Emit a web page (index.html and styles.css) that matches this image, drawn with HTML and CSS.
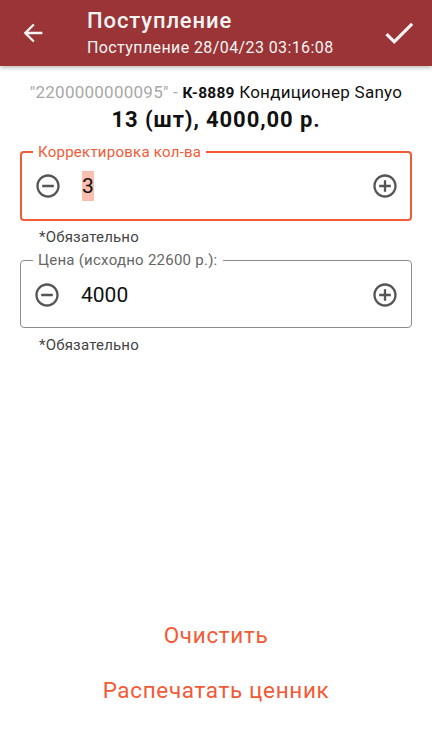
FILE: index.html
```html
<!DOCTYPE html>
<html lang="ru">
<head>
    <meta charset="UTF-8">
    <meta name="viewport" content="width=device-width, initial-scale=1.0">
    <title>Поступление</title>
    <link rel="stylesheet" href="styles.css">
</head>
<body>
    <header class="toolbar">
        <button class="icon-btn back" aria-label="Назад">
            <svg width="28" height="28" viewBox="0 0 24 24"><path fill="currentColor" d="M20 11H7.83l5.59-5.59L12 4l-8 8 8 8 1.41-1.41L7.83 13H20v-2z"/></svg>
        </button>
        <div class="titles">
            <div class="title">Поступление</div>
            <div class="subtitle">Поступление 28/04/23 03:16:08</div>
        </div>
        <button class="icon-btn done" aria-label="Готово">
            <svg width="38" height="38" viewBox="0 0 24 24"><path fill="currentColor" d="M9 16.17L4.83 12l-1.42 1.41L9 19 21 7l-1.41-1.41z"/></svg>
        </button>
    </header>

    <main class="content">
        <div class="item">
            <span class="barcode">"2200000000095" - </span><b class="code">К-8889</b> Кондиционер Sanyo
        </div>
        <div class="total">13 (шт), 4000,00 р.</div>

        <fieldset class="field active">
            <legend>Корректировка кол-ва</legend>
            <div class="stepper">
                <button class="icon-btn step" aria-label="Меньше">
                    <svg width="28" height="28" viewBox="0 0 24 24"><path fill="currentColor" d="M7 11v2h10v-2H7zm5-9C6.48 2 2 6.48 2 12s4.48 10 10 10 10-4.48 10-10S17.52 2 12 2zm0 18c-4.41 0-8-3.59-8-8s3.59-8 8-8 8 3.59 8 8-3.59 8-8 8z"/></svg>
                </button>
                <div class="value"><span class="selected">3</span></div>
                <button class="icon-btn step" aria-label="Больше">
                    <svg width="28" height="28" viewBox="0 0 24 24"><path fill="currentColor" d="M13 7h-2v4H7v2h4v4h2v-4h4v-2h-4V7zm-1-5C6.48 2 2 6.48 2 12s4.48 10 10 10 10-4.48 10-10S17.52 2 12 2zm0 18c-4.41 0-8-3.59-8-8s3.59-8 8-8 8 3.59 8 8-3.59 8-8 8z"/></svg>
                </button>
            </div>
        </fieldset>
        <div class="hint">*Обязательно</div>

        <fieldset class="field">
            <legend>Цена (исходно 22600 р.):</legend>
            <div class="stepper">
                <button class="icon-btn step" aria-label="Меньше">
                    <svg width="28" height="28" viewBox="0 0 24 24"><path fill="currentColor" d="M7 11v2h10v-2H7zm5-9C6.48 2 2 6.48 2 12s4.48 10 10 10 10-4.48 10-10S17.52 2 12 2zm0 18c-4.41 0-8-3.59-8-8s3.59-8 8-8 8 3.59 8 8-3.59 8-8 8z"/></svg>
                </button>
                <div class="value">4000</div>
                <button class="icon-btn step" aria-label="Больше">
                    <svg width="28" height="28" viewBox="0 0 24 24"><path fill="currentColor" d="M13 7h-2v4H7v2h4v4h2v-4h4v-2h-4V7zm-1-5C6.48 2 2 6.48 2 12s4.48 10 10 10 10-4.48 10-10S17.52 2 12 2zm0 18c-4.41 0-8-3.59-8-8s3.59-8 8-8 8 3.59 8 8-3.59 8-8 8z"/></svg>
                </button>
            </div>
        </fieldset>
        <div class="hint second">*Обязательно</div>

        <div class="actions">
            <button class="text-btn">Очистить</button>
            <button class="text-btn">Распечатать ценник</button>
        </div>
    </main>
</body>
</html>
```

FILE: styles.css
```css
:root {
    --primary: #9a3436;
    --accent: #f35a36;
    --text: #111111;
    --muted: #a8a8a8;
    --icon: #555555;
}

* {
    box-sizing: border-box;
}

body {
    margin: 0;
    min-height: 100vh;
    display: flex;
    flex-direction: column;
    background: #ffffff;
    color: var(--text);
    font-family: Roboto, "Noto Sans", sans-serif;
}

.icon-btn {
    background: none;
    border: none;
    padding: 0;
    display: flex;
    align-items: center;
    justify-content: center;
    color: inherit;
    cursor: pointer;
}

/* toolbar */
.toolbar {
    height: 66px;
    flex: none;
    display: flex;
    align-items: center;
    background: var(--primary);
    color: #f4f4f4;
    box-shadow: 0 2px 4px rgba(0, 0, 0, 0.25);
}

.back {
    margin-left: 19px;
}

.titles {
    flex: 1;
    margin-left: 40px;
}

.title {
    font-size: 22px;
    font-weight: 500;
    line-height: 28px;
    letter-spacing: 0.9px;
    padding-top: 2px;
}

.subtitle {
    font-size: 16px;
    line-height: 26px;
    letter-spacing: 0.4px;
}

.done {
    margin-right: 14px;
}

/* content */
.content {
    flex: 1;
    display: flex;
    flex-direction: column;
}

.item {
    margin-top: 16px;
    text-align: center;
    font-size: 17px;
    line-height: 20px;
    letter-spacing: 0.25px;
}

.barcode {
    color: var(--muted);
}

.code {
    font-size: 15.5px;
}

.total {
    margin-top: 3px;
    text-align: center;
    font-size: 22px;
    font-weight: 700;
    line-height: 28px;
    letter-spacing: 0.9px;
}

.field {
    margin: 10px 20px 0;
    padding: 0;
    border: 1px solid #8c8c8c;
    border-radius: 4px;
    min-width: 0;
}

.field legend {
    margin-left: 12px;
    padding: 0 5px;
    font-size: 15px;
    line-height: 16px;
    letter-spacing: 0.25px;
    color: #666666;
}

.field.active {
    border: 2px solid var(--accent);
}

.field.active legend {
    margin-left: 11px;
    color: var(--accent);
}

.stepper {
    display: flex;
    align-items: center;
    height: 40px;
    margin: 7px 0 12px;
    padding: 0 12px;
    color: var(--icon);
}

.field.active .stepper {
    margin: 6px 0 13px;
    padding: 0 11px 0 12px;
}

.value {
    flex: 1;
    margin-left: 20px;
    font-size: 21px;
    color: var(--text);
}

.selected {
    background: #f9beb0;
    padding: 3px 0;
}

.hint {
    margin: 6px 0 0 39px;
    font-size: 15px;
    line-height: 20px;
    letter-spacing: 0.2px;
    color: #444444;
}

.hint + .field {
    margin-top: 5px;
}

.hint.second {
    margin-top: 7px;
}

.actions {
    margin-top: auto;
    padding-bottom: 21px;
    display: flex;
    flex-direction: column;
    align-items: center;
}

.text-btn {
    background: none;
    border: none;
    height: 55px;
    font-family: inherit;
    font-size: 22.5px;
    letter-spacing: 0.65px;
    color: var(--accent);
    cursor: pointer;
}
```
